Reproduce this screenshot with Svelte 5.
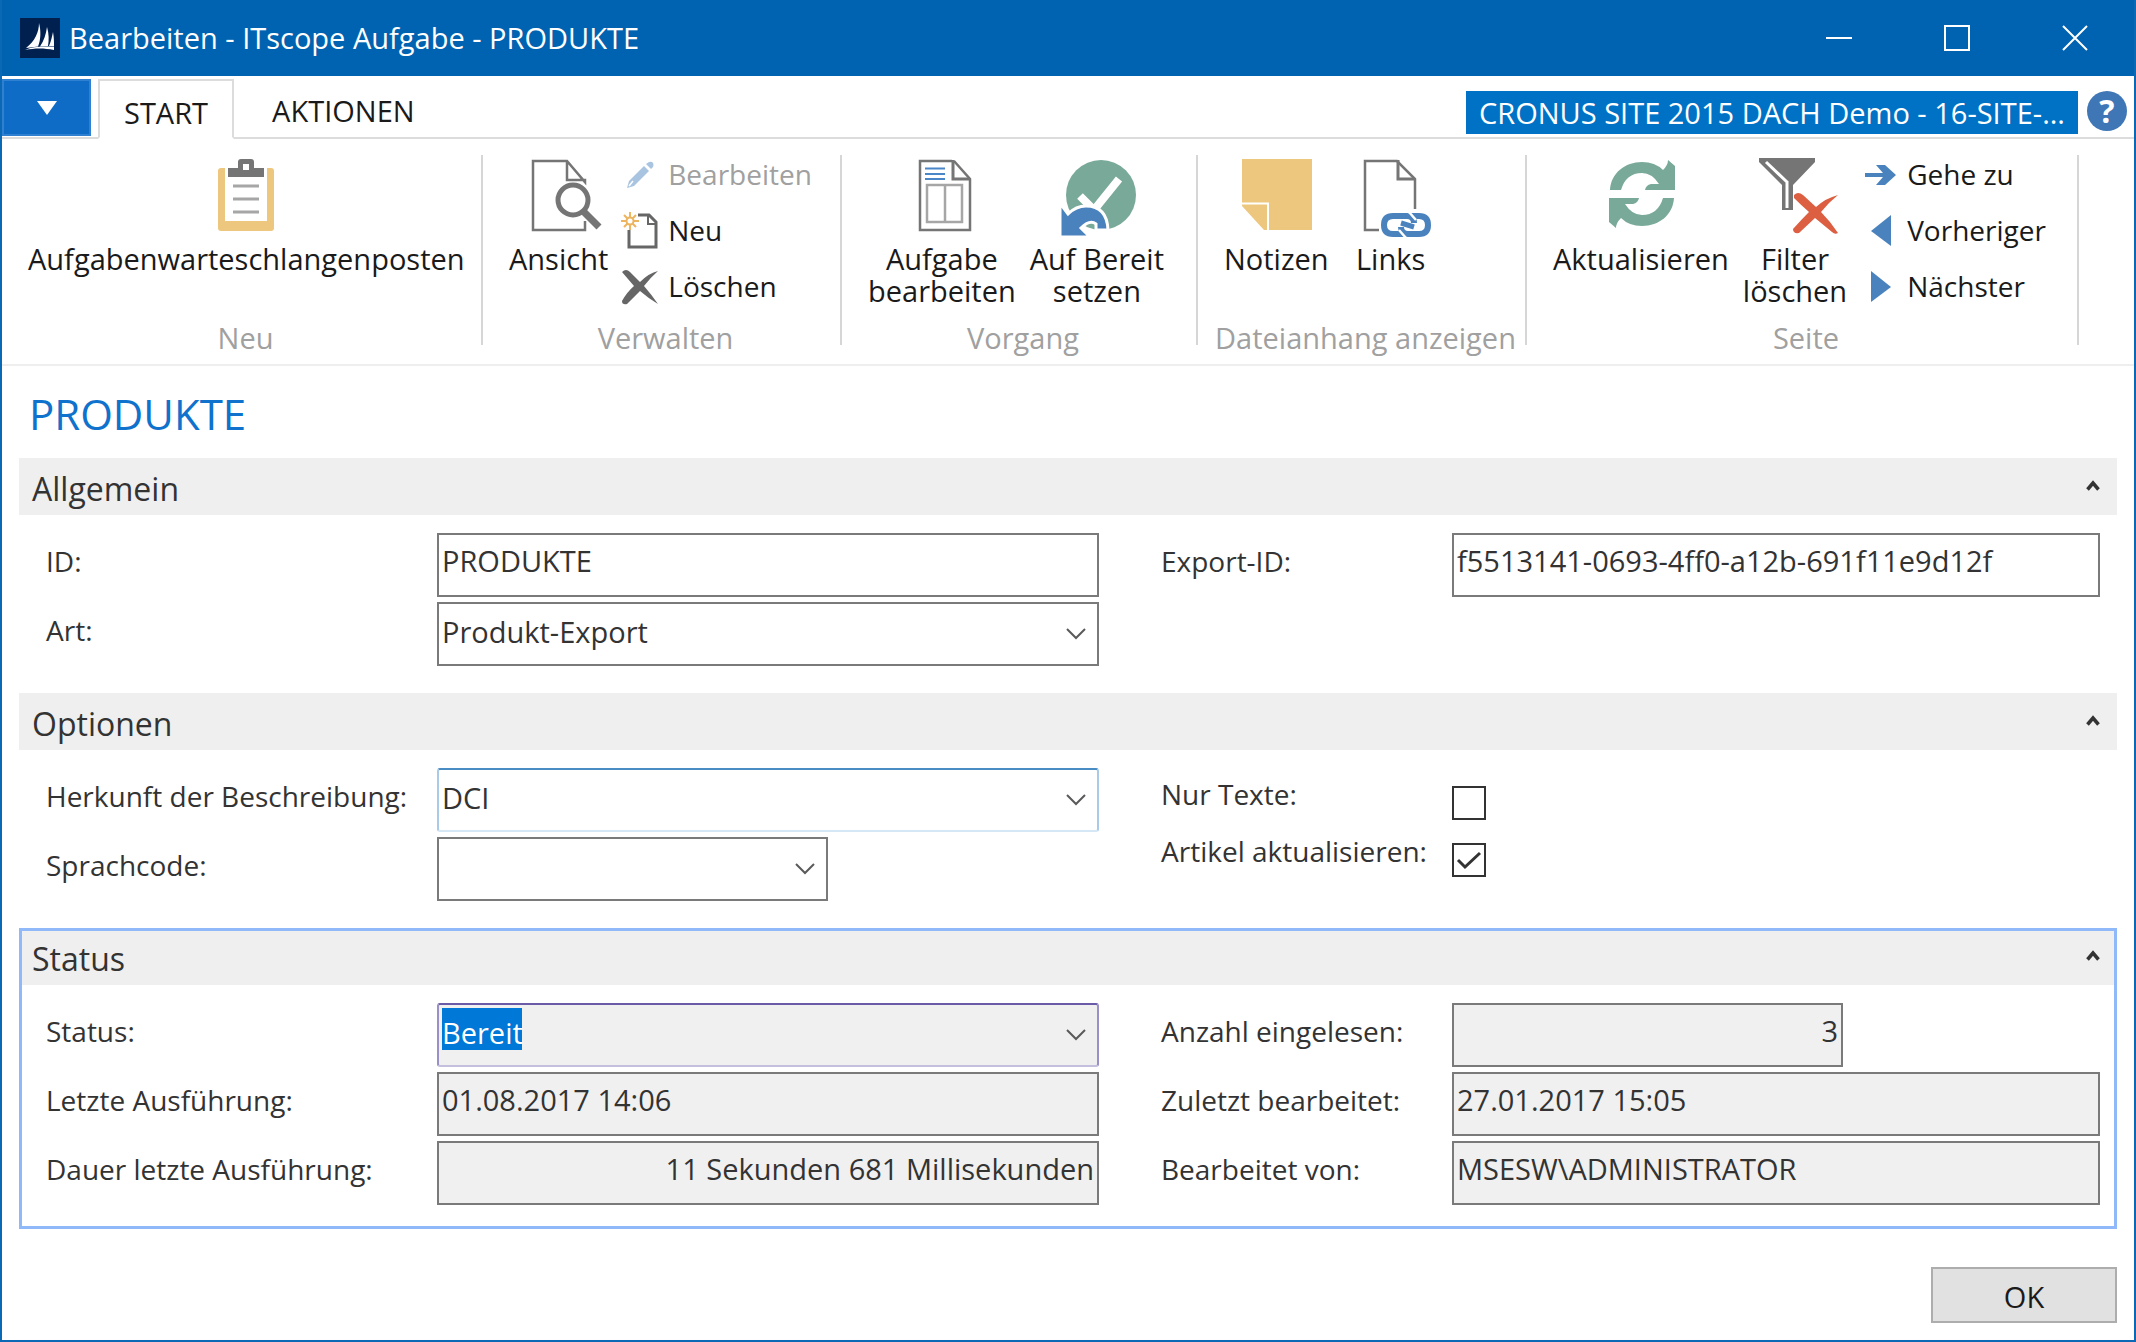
<script>
	let status = $state('Bereit');
	let artikelAktualisieren = $state(true);
	let nurTexte = $state(false);
</script>

{#snippet chevron()}
	<svg class="chevron" width="20" height="12" viewBox="0 0 20 12" aria-hidden="true">
		<path d="M1 1l9 9 9-9" fill="none" stroke="#5a5a5a" stroke-width="2" />
	</svg>
{/snippet}

{#snippet sectionHead(title)}
	<button class="section-head" type="button" aria-expanded="true">
		<span>{title}</span>
		<svg width="14" height="14" viewBox="0 0 14 14" aria-hidden="true">
			<path d="M1.500 9.500L7 3l5.500 6.500" fill="none" stroke="#333" stroke-width="3.500" />
		</svg>
	</button>
{/snippet}

{#snippet textRow(id, label, value, kind = '')}
	<div class="row">
		<label for={id}>{label}</label>
		<input {id} class="box {kind}" type="text" {value} readonly={kind.includes('locked')} />
	</div>
{/snippet}

<div class="window">
	<header class="titlebar">
		<svg class="app-icon" width="40" height="40" viewBox="0 0 40 40" aria-hidden="true">
			<rect width="40" height="40" fill="#002050" />
			<path d="M19 5c0 9-4 18-13 25l12-1.500c3-7 3-16 1-23.500z" fill="#fff" />
			<path d="M27 9c-1 7-3 14-7 19.500l8-.5c1-6 1-12-1-19z" fill="#fff" />
			<path d="M33 14c-1 5-2 9-4 14l5 .5c0-5 0-9-1-14.500z" fill="#fff" />
			<path d="M5 32c8-3.500 18-4 29-3v3c-10-2-19-2-29 0z" fill="#fff" />
		</svg>
		<h1>Bearbeiten - ITscope Aufgabe - PRODUKTE</h1>
		<div class="window-buttons">
			<button type="button" aria-label="Minimieren">
				<svg width="26" height="26" viewBox="0 0 26 26"><path d="M0 13h26" stroke="#fff" stroke-width="2" /></svg>
			</button>
			<button type="button" aria-label="Maximieren">
				<svg width="26" height="26" viewBox="0 0 26 26"><path d="M1 1h24v24H1z" fill="none" stroke="#fff" stroke-width="2" /></svg>
			</button>
			<button type="button" aria-label="Schließen">
				<svg width="26" height="26" viewBox="0 0 26 26"><path d="M1 1l24 24M25 1L1 25" stroke="#fff" stroke-width="2" /></svg>
			</button>
		</div>
	</header>

	<nav class="tabs">
		<button class="file-menu" type="button" aria-label="Menü">
			<svg width="20" height="14" viewBox="0 0 20 14"><path d="M0 0h20L10 14z" fill="#fff" /></svg>
		</button>
		<button class="tab active" type="button">START</button>
		<button class="tab" type="button">AKTIONEN</button>
		<div class="company">
			<a href="#firma">CRONUS SITE 2015 DACH Demo - 16-SITE-...</a>
			<button type="button" class="help" aria-label="Hilfe">?</button>
		</div>
	</nav>

	<div class="ribbon">
		<section class="group">
			<div class="actions">
				<button class="big" type="button">
					<svg viewBox="0 0 72 80" aria-hidden="true">
						<rect x="8" y="11" width="56" height="63" rx="3" fill="#edc77e" />
						<path d="M15 11h42v53H15z" fill="#fff" />
						<path d="M18 11h10V5q0-3 3-3h10q3 0 3 3v6h10v9H18z" fill="#757575" />
						<rect x="33" y="7" width="6" height="6" fill="#fff" />
						<path d="M23 29h26M23 42h26M23 55h26" stroke="#a6a6a6" stroke-width="3" />
					</svg>
					<span>Aufgabenwarteschlangenposten</span>
				</button>
			</div>
			<h2>Neu</h2>
		</section>

		<section class="group">
			<div class="actions">
				<button class="big" type="button">
					<svg viewBox="0 0 72 80" aria-hidden="true">
						<path d="M62 64v9H10V4h34l18 21v-2H44V4M62 22v4" fill="none" stroke="#757575" stroke-width="2.500" />
						<circle cx="50" cy="43" r="15" fill="#fff" stroke="#757575" stroke-width="5" />
						<path d="M60 54l16 16" stroke="#757575" stroke-width="7" />
					</svg>
					<span>Ansicht</span>
				</button>
				<div class="list">
					<button class="small" type="button" disabled>
						<svg viewBox="0 0 36 36" aria-hidden="true">
							<path d="M7 24L22 9l5 5-15 15-7 2z" fill="#a9c4e0" />
							<path d="M24 7l3-2q3-1 4 1t0 4l-2 2z" fill="#a9c4e0" />
							<path d="M7 29l4-5" stroke="#fff" stroke-width="1.500" />
						</svg>
						<span>Bearbeiten</span>
					</button>
					<button class="small" type="button">
						<svg viewBox="0 0 36 36" aria-hidden="true">
							<path d="M16 2h11l7 7v25H7V17" fill="none" stroke="#666" stroke-width="3" />
							<path d="M26 2v9h8" fill="none" stroke="#666" stroke-width="2" />
							<path d="M8-1v18M-1 8h18M2 2l12 12M14 2L2 14" stroke="#edb55f" stroke-width="2" />
							<circle cx="8" cy="8" r="3.500" fill="#fff" stroke="#edb55f" stroke-width="2" />
						</svg>
						<span>Neu</span>
					</button>
					<button class="small" type="button">
						<svg viewBox="0 0 36 36" aria-hidden="true">
							<path d="M0 3q4-4 8 0l10 10Q27 4 36 2q-8 7-14 15 7 8 14 18Q26 29 18 22L5 35q-5 1-5-3 5-9 12-15z" fill="#666" />
						</svg>
						<span>Löschen</span>
					</button>
				</div>
			</div>
			<h2>Verwalten</h2>
		</section>

		<section class="group">
			<div class="actions">
				<button class="big" type="button">
					<svg viewBox="0 0 72 80" aria-hidden="true">
						<path d="M46 4H14v69h50V22L48 4" fill="none" stroke="#757575" stroke-width="2.500" />
						<path d="M47 3v19h17" fill="none" stroke="#757575" stroke-width="3" />
						<path d="M19 11.500h20M19 17h20M19 22h20" stroke="#4a86c8" stroke-width="2" />
						<path d="M21 28h35v37H21zM39 28v37" fill="none" stroke="#a6a6a6" stroke-width="2.500" />
					</svg>
					<span>Aufgabe<br />bearbeiten</span>
				</button>
				<button class="big" type="button">
					<svg viewBox="0 0 72 80" aria-hidden="true">
						<circle cx="40" cy="38" r="35" fill="#79a998" />
						<path d="M19 39l14 14 25-31" fill="none" stroke="#fff" stroke-width="8" />
						<path d="M-1 46v34h30l-9-9q9-9 15-4v6h12q-1-24-22-24-10 0-18 8z" fill="#4a82bd" stroke="#fff" stroke-width="3" />
						<path d="M-3 44v38" stroke="#fff" stroke-width="4" />
					</svg>
					<span>Auf Bereit<br />setzen</span>
				</button>
			</div>
			<h2>Vorgang</h2>
		</section>

		<section class="group">
			<div class="actions">
				<button class="big" type="button">
					<svg viewBox="0 0 72 80" aria-hidden="true">
						<path d="M2 2h70v71H24L2 49z" fill="#edc77e" />
						<path d="M2 46.500h26V74" fill="none" stroke="#fff" stroke-width="2" />
					</svg>
					<span>Notizen</span>
				</button>
				<button class="big" type="button">
					<svg viewBox="0 0 72 80" aria-hidden="true">
						<path d="M60 52V22L42 4H10v69h14" fill="none" stroke="#757575" stroke-width="2.500" />
						<path d="M43 3v19h17" fill="none" stroke="#757575" stroke-width="3" />
						<path d="M50 77H38q-9 0-9-9t9-9h14q7 0 7 7" fill="none" stroke="#4a82bd" stroke-width="6" />
						<path d="M56 59h8q9 0 9 9t-9 9H53q-7 0-7-7" fill="none" stroke="#4a82bd" stroke-width="6" />
						<path d="M54 55l7 8M44 73l7 8" stroke="#fff" stroke-width="2.500" />
						<path d="M46 66l13 4" stroke="#4a82bd" stroke-width="5" />
					</svg>
					<span>Links</span>
				</button>
			</div>
			<h2>Dateianhang anzeigen</h2>
		</section>

		<section class="group">
			<div class="actions">
				<button class="big" type="button">
					<svg viewBox="0 0 72 80" aria-hidden="true">
						<g fill="#79a998">
							<path d="M5 33C6 16 20 5 37 5q13 0 21 8 5-5 5-10l7 6v24H40q1-5 6-6h8Q47 16 37 16q-16 0-21 17z" />
							<path d="M5 33C6 16 20 5 37 5q13 0 21 8 5-5 5-10l7 6v24H40q1-5 6-6h8Q47 16 37 16q-16 0-21 17z" transform="rotate(180 37 37)" />
						</g>
					</svg>
					<span>Aktualisieren</span>
				</button>
				<button class="big" type="button">
					<svg viewBox="0 0 72 80" aria-hidden="true">
						<path d="M0 1h56v4L34 28v25H23V28L0 5z" fill="#757575" />
						<path d="M7 5l21 20M28 24v27" stroke="#fff" stroke-width="3" />
						<path d="M35 38q4-4 9 0l13 12Q67 41 79 38q-10 8-17 17 9 9 17 21-3 2-6-1L56 61 40 76q-6 1-6-4 8-9 16-17-8-7-15-14z" fill="#dc5f41" />
					</svg>
					<span>Filter<br />löschen</span>
				</button>
				<div class="list">
					<button class="small" type="button">
						<svg viewBox="0 0 36 36" aria-hidden="true">
							<path d="M4 16h18l-7-8h9l11 10-11 10h-9l7-8H4z" fill="#4a82bd" />
						</svg>
						<span>Gehe zu</span>
					</button>
					<button class="small" type="button">
						<svg viewBox="0 0 36 36" aria-hidden="true">
							<path d="M30 2v31L10 18z" fill="#4a82bd" />
						</svg>
						<span>Vorheriger</span>
					</button>
					<button class="small" type="button">
						<svg viewBox="0 0 36 36" aria-hidden="true">
							<path d="M10 2v31l20-15z" fill="#4a82bd" />
						</svg>
						<span>Nächster</span>
					</button>
				</div>
			</div>
			<h2>Seite</h2>
		</section>
	</div>

	<main>
		<h2 class="page-title">PRODUKTE</h2>

		<section class="fasttab">
			{@render sectionHead('Allgemein')}
			<div class="fields">
				<div class="column">
					{@render textRow('id', 'ID:', 'PRODUKTE')}
					<div class="row">
						<label for="art">Art:</label>
						<div class="combo">
							<select id="art" class="box">
								<option>Produkt-Export</option>
							</select>
							{@render chevron()}
						</div>
					</div>
				</div>
				<div class="column">
					{@render textRow('export-id', 'Export-ID:', 'f5513141-0693-4ff0-a12b-691f11e9d12f')}
				</div>
			</div>
		</section>

		<section class="fasttab">
			{@render sectionHead('Optionen')}
			<div class="fields">
				<div class="column">
					<div class="row">
						<label for="herkunft">Herkunft der Beschreibung:</label>
						<div class="combo">
							<select id="herkunft" class="box hovered">
								<option>DCI</option>
							</select>
							{@render chevron()}
						</div>
					</div>
					<div class="row">
						<label for="sprachcode">Sprachcode:</label>
						<div class="combo short">
							<select id="sprachcode" class="box">
								<option></option>
							</select>
							{@render chevron()}
						</div>
					</div>
				</div>
				<div class="column checks">
					<div class="row check-row">
						<label for="nur-texte">Nur Texte:</label>
						<div class="check">
							<input id="nur-texte" type="checkbox" bind:checked={nurTexte} />
							<svg width="34" height="34" viewBox="0 0 34 34" aria-hidden="true"><path d="M6 17l7 7L28 10" /></svg>
						</div>
					</div>
					<div class="row check-row">
						<label for="artikel">Artikel aktualisieren:</label>
						<div class="check">
							<input id="artikel" type="checkbox" bind:checked={artikelAktualisieren} />
							<svg width="34" height="34" viewBox="0 0 34 34" aria-hidden="true"><path d="M6 17l7 7L28 10" /></svg>
						</div>
					</div>
				</div>
			</div>
		</section>

		<section class="fasttab current">
			{@render sectionHead('Status')}
			<div class="fields">
				<div class="column">
					<div class="row">
						<label for="status">Status:</label>
						<div class="combo">
							<select id="status" class="box locked marked" bind:value={status}>
								<option>Bereit</option>
							</select>
							{@render chevron()}
						</div>
					</div>
					{@render textRow('letzte', 'Letzte Ausführung:', '01.08.2017 14:06', 'locked')}
					{@render textRow('dauer', 'Dauer letzte Ausführung:', '11 Sekunden 681 Millisekunden', 'locked number')}
				</div>
				<div class="column">
					{@render textRow('anzahl', 'Anzahl eingelesen:', '3', 'locked number short')}
					{@render textRow('zuletzt', 'Zuletzt bearbeitet:', '27.01.2017 15:05', 'locked')}
					{@render textRow('von', 'Bearbeitet von:', 'MSESW\\ADMINISTRATOR', 'locked')}
				</div>
			</div>
		</section>
	</main>

	<footer>
		<button class="ok" type="button">OK</button>
	</footer>
</div>

<style>
	:global(body) {
		margin: 0;
		background: #fff;
	}

	.window {
		box-sizing: border-box;
		display: flex;
		flex-direction: column;
		min-height: 100vh;
		border: 2px solid #0a68b4;
		border-top: 0;
		background: #fff;
		color: #333;
		font-family: 'Open Sans', 'Noto Sans', sans-serif;
		font-size: 29px;
	}

	button,
	input,
	select {
		box-sizing: border-box;
		margin: 0;
		font: inherit;
		color: inherit;
	}

	button {
		padding: 0;
		border: 0;
		background: none;
	}

	h1,
	h2 {
		margin: 0;
		font-size: inherit;
		font-weight: 400;
	}

	.titlebar {
		display: flex;
		align-items: center;
		height: 76px;
		padding-left: 18px;
		background: #0063b1;
		color: #fff;
	}

	.titlebar h1 {
		flex: 1;
		margin-left: 9px;
		line-height: 80px;
	}

	.window-buttons {
		display: flex;
	}

	.window-buttons button {
		display: grid;
		place-items: center;
		width: 118px;
		height: 76px;
	}

	.tabs {
		display: flex;
		align-items: flex-end;
		height: 61px;
		border-bottom: 2px solid #dcdcdc;
		color: #1a1a1a;
	}

	.file-menu {
		display: grid;
		place-items: center;
		width: 89px;
		height: 57px;
		margin: 0 7px 1px 0;
		border: 2px solid #2f80d0;
		background: #0f6cc6;
	}

	.tab {
		height: 58px;
		padding: 6px 24px 0;
		line-height: 52px;
	}

	.tab.active {
		height: 60px;
		margin-right: 14px;
		margin-bottom: -2px;
		border: 2px solid #dcdcdc;
		border-bottom: 2px solid #fff;
		background: #fff;
	}

	.company {
		display: flex;
		align-items: flex-start;
		gap: 9px;
		margin-left: auto;
		padding: 0 7px 3px 0;
	}

	.company a {
		padding: 0 13px;
		background: #0072c6;
		color: #fff;
		line-height: 43px;
		text-decoration: none;
	}

	.help {
		width: 40px;
		height: 40px;
		border-radius: 50%;
		background: #3f76b5;
		color: #fff;
		font-size: 32px;
		font-weight: 700;
		line-height: 40px;
	}

	.ribbon {
		display: grid;
		grid-template-columns: 481px 359px 356px 329px 552px;
		height: 209px;
		padding-top: 16px;
		border-bottom: 2px solid #eee;
		color: #1a1a1a;
	}

	.group {
		display: flex;
		flex-direction: column;
		background: linear-gradient(#d6d6d6, #d6d6d6) right top / 2px 190px no-repeat;
	}

	.group h2 {
		padding-left: 6px;
		color: #a0a0a0;
		line-height: 40px;
		text-align: center;
	}

	.actions {
		display: flex;
		gap: 14px;
		height: 163px;
		padding-left: 26px;
	}

	.big {
		display: flex;
		flex-direction: column;
		align-items: center;
		gap: 6px;
		min-width: 96px;
		padding-top: 2px;
		line-height: 32px;
	}

	.big svg {
		width: 72px;
		height: 80px;
		overflow: visible;
	}

	.list {
		display: flex;
		flex-direction: column;
	}

	.small {
		display: flex;
		align-items: center;
		gap: 10px;
		height: 56px;
		padding-bottom: 17px;
		font-size: 28px;
		line-height: 39px;
	}

	.small:disabled {
		color: #a0a0a0;
	}

	.small svg {
		width: 36px;
		height: 36px;
		overflow: visible;
	}

	main {
		padding: 0 17px;
	}

	.page-title {
		padding: 4px 0 0 10px;
		color: #0f72cc;
		font-size: 42px;
		line-height: 88px;
	}

	.fasttab {
		margin-bottom: 27px;
	}

	.section-head {
		display: flex;
		align-items: center;
		justify-content: space-between;
		width: 100%;
		height: 57px;
		padding: 5px 17px 0 13px;
		background: #efefef;
		font-size: 32px;
		line-height: 52px;
	}

	.section-head svg {
		margin-bottom: 4px;
	}

	.fields {
		display: grid;
		grid-template-columns: 1053fr 939fr;
		column-gap: 62px;
		padding: 18px 17px 0 27px;
	}

	.column {
		display: flex;
		flex-direction: column;
		gap: 5px;
	}

	.row {
		display: grid;
		grid-template-columns: 391px 1fr;
		line-height: 56px;
	}

	.row label {
		font-size: 28px;
	}

	.column:last-child .row {
		grid-template-columns: 291px 1fr;
	}

	.box {
		width: 100%;
		height: 64px;
		padding: 0 3px 10px;
		border: 2px solid #7a7a7a;
		border-radius: 0;
		outline: 0;
		appearance: none;
		background-color: #fff;
	}

	select.box {
		padding-bottom: 12px;
	}

	.locked {
		background-color: #f0f0f0;
	}

	.number {
		text-align: right;
	}

	.short {
		width: 391px;
	}

	.hovered {
		border-color: #4a8cc4 #a9cbe8 #d5e6f5;
		border-radius: 3px;
	}

	/* the current field shows its text as selected */
	.marked {
		border-color: #6b5aa8 #9a8fc6 #c4bfdd;
		border-radius: 3px;
		background-image: linear-gradient(#0078d7, #0078d7);
		background-position: 3px 3px;
		background-size: 80px 42px;
		background-repeat: no-repeat;
		color: #fff;
	}

	.combo,
	.check {
		display: grid;
		justify-items: end;
		align-items: center;
	}

	.combo > :global(*),
	.check > :global(*) {
		grid-area: 1 / 1;
	}

	.chevron {
		margin-right: 13px;
		pointer-events: none;
	}

	.checks {
		gap: 7px;
	}

	.check-row {
		height: 50px;
		line-height: 52px;
	}

	.check {
		justify-self: start;
		align-self: end;
	}

	.check input {
		width: 34px;
		height: 34px;
		border: 2px solid #333;
		appearance: none;
		background: #fff;
	}

	.check svg {
		fill: none;
		stroke: #333;
		stroke-width: 3;
		pointer-events: none;
		visibility: hidden;
	}

	.check input:checked + svg {
		visibility: visible;
	}

	.current {
		padding-bottom: 24px;
		outline: 3px solid #8fb9f8;
		outline-offset: -3px;
	}

	footer {
		display: flex;
		justify-content: flex-end;
		margin-top: auto;
		padding: 0 17px 17px;
	}

	.ok {
		width: 186px;
		height: 56px;
		padding-top: 2px;
		border: 2px solid #adadad;
		background: #e1e1e1;
		color: #1a1a1a;
	}
</style>
